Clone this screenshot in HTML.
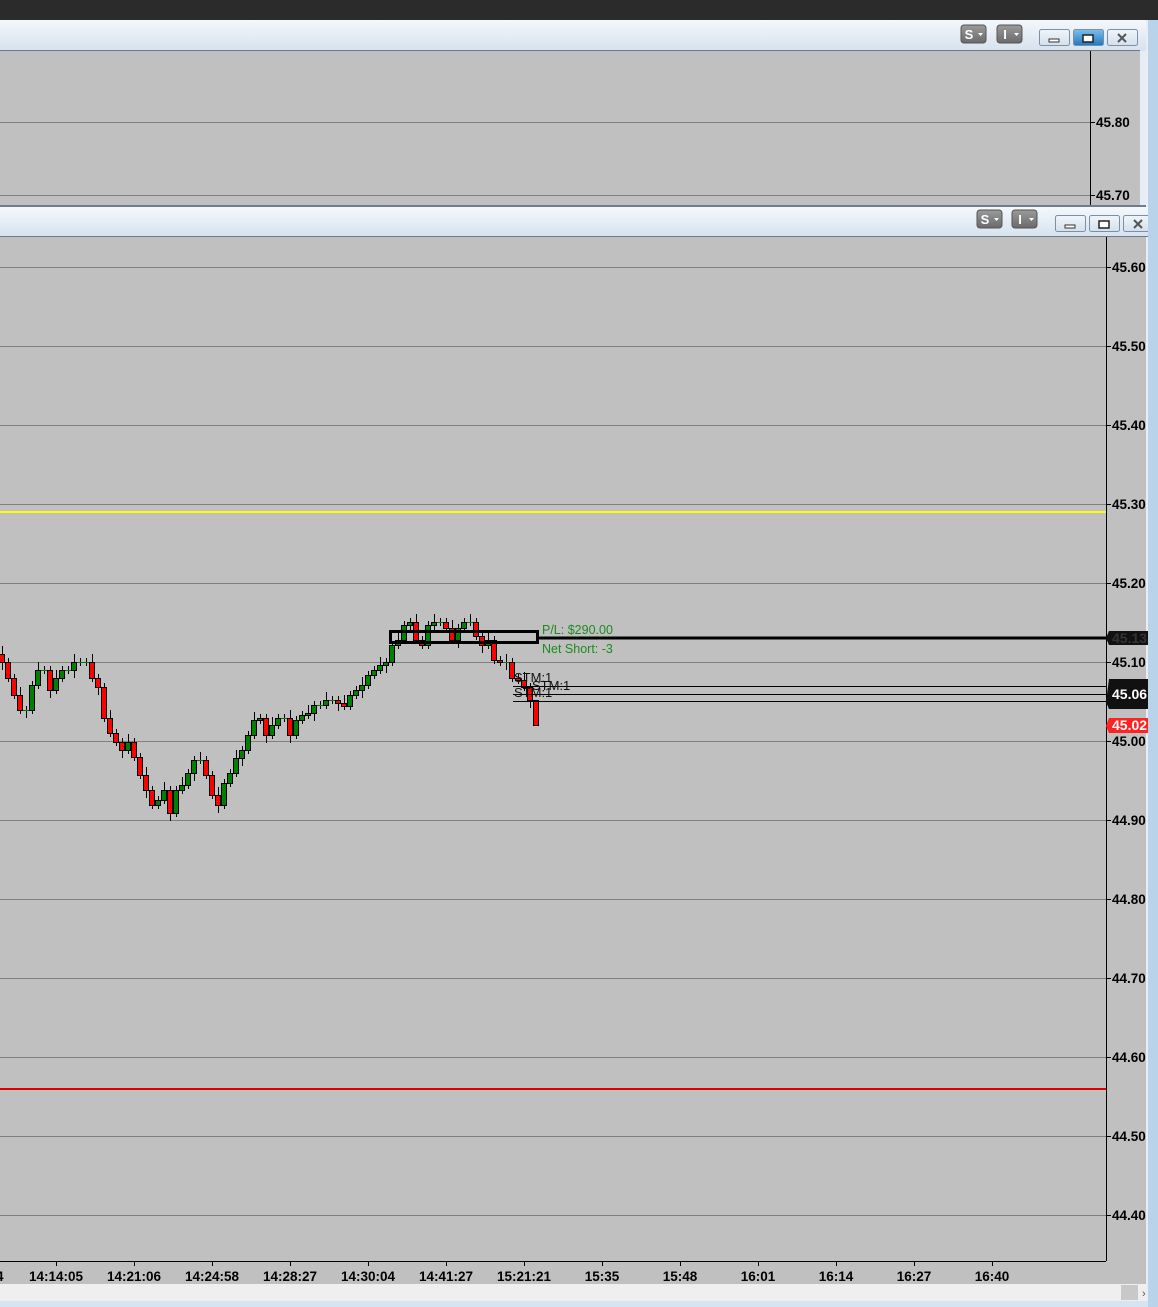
<!DOCTYPE html>
<html><head><meta charset="utf-8"><style>
html,body{margin:0;padding:0;width:1158px;height:1307px;overflow:hidden;background:#c0c0c0;font-family:"Liberation Sans",sans-serif}
svg{display:block}
</style></head><body>
<svg id="s" width="1158" height="1307" xmlns="http://www.w3.org/2000/svg" font-family="Liberation Sans, sans-serif">
<defs>
<linearGradient id="tb" x1="0" y1="0" x2="0" y2="1"><stop offset="0" stop-color="#f4f8fc"/><stop offset="1" stop-color="#d6e2ee"/></linearGradient>
<linearGradient id="btn" x1="0" y1="0" x2="0" y2="1"><stop offset="0" stop-color="#9a9a9a"/><stop offset="1" stop-color="#6a6a6a"/></linearGradient>
<linearGradient id="wb" x1="0" y1="0" x2="0" y2="1"><stop offset="0" stop-color="#f0f5fa"/><stop offset="1" stop-color="#d4e0ec"/></linearGradient>
<linearGradient id="wbA" x1="0" y1="0" x2="0" y2="1"><stop offset="0" stop-color="#7cc0ec"/><stop offset="1" stop-color="#1f78c0"/></linearGradient>
</defs>
<rect x="0" y="0" width="1158" height="1307" fill="#c0c0c0"/>
<rect x="0" y="0" width="1158" height="20" fill="#2b2b2b"/>
<rect x="1146" y="20" width="2" height="1287" fill="#e8eef4"/>
<rect x="0" y="20" width="1146" height="31" fill="url(#tb)"/>
<rect x="0" y="50" width="1140" height="1" fill="#6c7a88"/>
<rect x="0" y="51" width="1140" height="154" fill="#c0c0c0"/>
<rect x="1140" y="51" width="6" height="154" fill="#e6edf4"/>
<line x1="0" y1="122.5" x2="1090" y2="122.5" stroke="#808080"/>
<line x1="0" y1="195.5" x2="1090" y2="195.5" stroke="#808080"/>
<line x1="1090.5" y1="51" x2="1090.5" y2="205" stroke="#000"/>
<line x1="1090" y1="122.5" x2="1095" y2="122.5" stroke="#000"/>
<line x1="1090" y1="195.5" x2="1095" y2="195.5" stroke="#000"/>
<text x="1096" y="127" font-size="13.5" font-weight="bold">45.80</text>
<text x="1096" y="200" font-size="13.5" font-weight="bold">45.70</text>
<rect x="0" y="205" width="1146" height="2" fill="#6f7d8a"/>
<rect x="0" y="207" width="1148" height="30" fill="url(#tb)"/>
<rect x="0" y="236" width="1148" height="1" fill="#6c7a88"/>
<g id="btns"></g>
<line x1="1106.5" y1="237" x2="1106.5" y2="1261" stroke="#000"/>
<line x1="0" y1="1261.5" x2="1106" y2="1261.5" stroke="#000"/>
<rect x="0" y="1284" width="1146" height="17" fill="#efefef"/>
<rect x="0" y="1301" width="1148" height="6" fill="#d5e4f1"/>
<rect x="1121" y="1285" width="17" height="15" fill="#c8c8c8"/>
<text x="1142" y="1297" font-size="11" fill="#555">›</text>
<g id="grid"></g>
<line x1="0" y1="512" x2="1106" y2="512" stroke="#ffff00" stroke-width="2"/>
<line x1="0" y1="1089" x2="1106" y2="1089" stroke="#e00000" stroke-width="2"/>
<g id="c"></g>
<rect x="390.5" y="631.5" width="147" height="11" fill="none" stroke="#000" stroke-width="3"/>
<line x1="537" y1="638" x2="1106" y2="638" stroke="#000" stroke-width="3"/>
<line x1="513" y1="686.5" x2="1106" y2="686.5" stroke="#000"/>
<line x1="513" y1="694.5" x2="1106" y2="694.5" stroke="#000"/>
<line x1="513" y1="701.5" x2="1106" y2="701.5" stroke="#000"/>
<text x="542" y="634" font-size="12.5" fill="#1e8a1e">P/L: $290.00</text>
<text x="542" y="653" font-size="12.5" fill="#1e8a1e">Net Short: -3</text>
<text x="514" y="682" font-size="13" fill="#111">STM:1</text>
<text x="532" y="690" font-size="13" fill="#111">STM:1</text>
<text x="514" y="697" font-size="13" fill="#111">STM:1</text>
<path d="M1109 631h49v14h-49l-3-7z" fill="#111"/>
<text x="1112" y="643" font-size="14" font-weight="bold" fill="#333">45.13</text>
<path d="M1109 679h49v30h-49l-3-7z" fill="#111"/>
<text x="1112" y="699" font-size="14" font-weight="bold" fill="#fff">45.06</text>
<path d="M1109 718h49v15h-49l-3-7z" fill="#f22"/>
<text x="1112" y="730" font-size="14" font-weight="bold" fill="#fff">45.02</text>
<g id="tl"></g>
<rect x="1148" y="0" width="10" height="1307" fill="#b9d3ea"/>
<rect x="1148" y="0" width="10" height="20" fill="#2b2b2b"/>
<rect x="1150" y="20" width="8" height="1287" fill="#b9d3ea"/>
</svg>
<script>
var NS="http://www.w3.org/2000/svg";
function el(p,t,a,txt){var e=document.createElementNS(NS,t);for(var k in a)e.setAttribute(k,a[k]);if(txt!=null)e.textContent=txt;document.getElementById(p).appendChild(e);return e;}
var labels=["45.60","45.50","45.40","45.30","45.20","45.10","45.00","44.90","44.80","44.70","44.60","44.50","44.40"];
for(var i=0;i<labels.length;i++){var y=267+i*79;
 el("grid","line",{x1:0,y1:y+.5,x2:1106,y2:y+.5,stroke:"#808080"});
 el("grid","line",{x1:1106,y1:y+.5,x2:1111,y2:y+.5,stroke:"#000"});
 el("grid","text",{x:1112,y:y+5,"font-size":13.5,"font-weight":"bold"},labels[i]);}
var tx=[56,134,212,290,368,446,524,602,680,758,836,914,992];
var tt=["14:14:05","14:21:06","14:24:58","14:28:27","14:30:04","14:41:27","15:21:21","15:35","15:48","16:01","16:14","16:27","16:40"];
el("tl","text",{x:-4,y:1281,"font-size":13.5,"font-weight":"bold"},"4");
for(var i=0;i<tx.length;i++){el("tl","line",{x1:tx[i]+.5,y1:1261,x2:tx[i]+.5,y2:1266,stroke:"#000"});
 el("tl","text",{x:tx[i],y:1281,"font-size":13.5,"font-weight":"bold","text-anchor":"middle"},tt[i]);}
function sbtn(x,y,l){el("btns","rect",{x:x,y:y,width:25,height:18,rx:3,fill:"url(#btn)",stroke:"#555"});
 el("btns","text",{x:x+8,y:y+14,"font-size":13,"font-weight":"bold",fill:"#fff","text-anchor":"middle"},l);
 el("btns","path",{d:"M"+(x+17)+" "+(y+8)+"h5l-2.5 3z",fill:"#fff"});}
function wbtn(x,y,t,act){el("btns","rect",{x:x+.5,y:y+.5,width:30,height:16,rx:2,fill:act?"url(#wbA)":"url(#wb)",stroke:"#7d8fa3"});
 var cx=x+15,cy=y+9;
 if(t==0)el("btns","rect",{x:cx-5,y:cy+1,width:10,height:3,fill:"#fff",stroke:"#333","stroke-width":1});
 if(t==1)el("btns","rect",{x:cx-5,y:cy-3,width:10,height:7,fill:"#fff",stroke:"#222","stroke-width":1.5});
 if(t==2)el("btns","path",{d:"M"+(cx-4)+" "+(cy-4)+"l8 8M"+(cx+4)+" "+(cy-4)+"l-8 8",stroke:"#555","stroke-width":2});}
sbtn(961,25,"S");sbtn(997,25,"I");wbtn(1039,29,0);wbtn(1073,29,1,true);wbtn(1107,29,2);
sbtn(977,210,"S");sbtn(1012,210,"I");wbtn(1055,215,0);wbtn(1089,215,1);wbtn(1123,215,2);
var ys=[662,678,695,710,710,685,670,670,690,678,670,670,662,662,662,678,687,718,733,742,750,742,757,775,790,805,800,790,813,790,785,773,760,760,775,795,805,783,773,758,750,735,720,718,735,725,718,718,735,720,715,713,705,705,700,700,703,706,695,690,685,675,670,665,662,645,640,625,622,640,645,625,622,622,628,640,628,622,622,636,645,640,660,662,662,678,680,687,700,725];
var prev=654;
for(var i=0;i<ys.length;i++){var x=2+i*6,o=prev,c=ys[i];
 var hi=Math.min(o,c)-((i*7)%3==0?8:4),lo=Math.max(o,c)+((i*5)%4==0?8:4);
 if(i==ys.length-1){hi=o;lo=c;}
 el("c","line",{x1:x+.5,y1:hi,x2:x+.5,y2:lo,stroke:"#000"});
 if(o==c){el("c","line",{x1:x-3,y1:c+.5,x2:x+4,y2:c+.5,stroke:"#008000"});}
 else{var up=c<o;el("c","rect",{x:x-2.5,y:Math.min(o,c)+.5,width:5,height:Math.abs(o-c),fill:up?"#008000":"#ff0000",stroke:"#000"});}
 prev=c;}
</script>
</body></html>
